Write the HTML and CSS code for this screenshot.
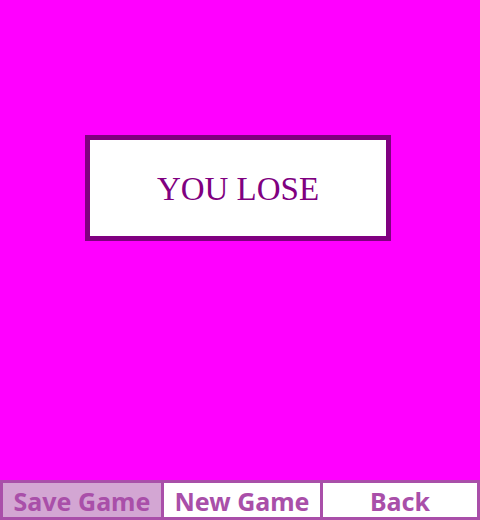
FILE: index.html
```html
<!DOCTYPE html>
<html>
<head>
<meta charset="utf-8">
<link rel="stylesheet" href="styles.css">
</head>
<body>
<div class="screen">
  <div class="stage">
    <div class="result">YOU LOSE</div>
  </div>
  <div class="bar">
    <button class="btn btn-save">Save Game</button>
    <button class="btn">New Game</button>
    <button class="btn">Back</button>
  </div>
</div>
</body>
</html>
```

FILE: styles.css
```css
html, body {
  margin: 0;
  padding: 0;
  background: #ff00ff;
}
.screen {
  width: 480px;
  height: 520px;
  display: flex;
  flex-direction: column;
}
.stage {
  flex: 1;
  padding-top: 135px;
  padding-left: 85px;
  box-sizing: border-box;
}
.result {
  width: 306px;
  height: 106px;
  box-sizing: border-box;
  border: 5px solid #800080;
  background: #ffffff;
  color: #800080;
  font-family: "Liberation Serif", serif;
  font-size: 33px;
  display: flex;
  align-items: center;
  justify-content: center;
  padding-top: 3px;
}
.bar {
  height: 40px;
  box-sizing: border-box;
  padding: 3px;
  gap: 3px;
  background: #a94fa9;
  display: grid;
  grid-template-columns: 158px 156px 154px;
}
.btn {
  margin: 0;
  border: 0;
  padding: 2px 0 0 0;
  background: #ffffff;
  color: #a94fa9;
  font-family: "Noto Sans", sans-serif;
  font-weight: bold;
  font-size: 25px;
  line-height: 32px;
  text-align: center;
}
.btn-save {
  background: #d3a6d3;
}
```
